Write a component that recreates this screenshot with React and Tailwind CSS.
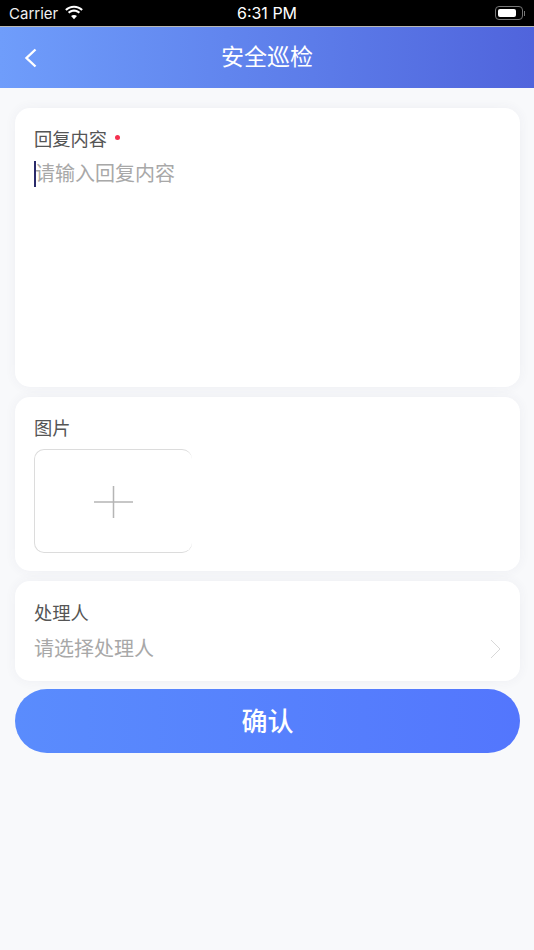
import React from "react";

const cjk = "font-['Liberation_Sans','Noto_Sans_CJK_SC',sans-serif]";

const Card = ({ className = "", children }) => (
  <div className={`ml-[15px] mr-[14px] rounded-[15px] bg-white pl-[19px] pr-[19px] shadow-[0_0_12px_rgba(60,70,100,0.06)] ${className}`}>
    {children}
  </div>
);

const StatusBar = () => (
  <div className="flex h-[27px] items-center justify-between border-b border-[#b9b9b4] bg-black pl-[9px] pr-[9px] text-white">
    <div className="flex w-[160px] items-center gap-[6px]">
      <span className="font-['Inter',sans-serif] text-[15px] leading-none text-[#f0f0f0]">Carrier</span>
      <svg width="20" height="15" viewBox="0 0 19 14" fill="white" className="-mt-[2px]">
        <path d="M9.5 2.6c2.7 0 5.1 1 7 2.8l1.4-1.5C15.700 1.800 12.700.5 9.500.5S3.300 1.800 1.100 3.900l1.400 1.500c1.900-1.800 4.300-2.800 7-2.800z" />
        <path d="M9.500 6.300c1.700 0 3.200.6 4.400 1.700l1.400-1.500c-1.500-1.400-3.600-2.300-5.800-2.300s-4.300.9-5.800 2.300l1.400 1.500c1.200-1.100 2.700-1.700 4.400-1.700z" />
        <path d="M9.500 9.300c-1.100 0-2.100.4-2.800 1.100l2.800 3 2.800-3c-.7-.7-1.700-1.100-2.800-1.100z" />
      </svg>
    </div>
    <span className="font-['Inter',sans-serif] text-[16px] font-normal leading-none">6:31 PM</span>
    <div className="flex w-[160px] items-center justify-end">
      <div className="flex h-[14px] w-[28px] items-center rounded-[4px] border border-[#777] p-[2px]">
        <div className="h-full w-[18px] rounded-[2px] bg-white" />
      </div>
      <div className="ml-[1px] h-[5px] w-[1px] bg-[#777]" />
    </div>
  </div>
);

const App = () => {
  return (
    <div className={`flex h-[950px] w-[534px] flex-col overflow-hidden bg-[#f8f9fb] ${cjk}`}>
      <StatusBar />

      {/* Header */}
      <div className="flex h-[61px] items-center bg-gradient-to-r from-[#6f9dfb] to-[#5064dc] px-[24px]">
        <div className="w-[40px]">
          <svg width="13" height="20" viewBox="0 0 13 20" fill="none" stroke="white" strokeWidth="2.4">
            <path d="M11.500 1.500 2.500 10l9 8.500" />
          </svg>
        </div>
        <h1 className="flex-1 text-center text-[23px] font-normal leading-none text-white">安全巡检</h1>
        <div className="w-[40px]" />
      </div>

      {/* Reply content */}
      <Card className="mt-[20px] h-[279px] pt-[22px]">
        <div className="flex h-[20px] items-center text-[18.300px] leading-none text-[#555]">
          回复内容
          <span className="-mt-[5px] ml-[8px] h-[5px] w-[5px] rounded-full bg-[#f5304f]" />
        </div>
        <div className="relative mt-[9px] flex h-[30px] items-center">
          <div className="absolute left-0 top-[2px] h-[26px] w-[2px] bg-[#2a2a6a]" />
          <span className="ml-[1px] text-[20px] leading-none text-[#a8a8a8]">请输入回复内容</span>
        </div>
      </Card>

      {/* Pictures */}
      <Card className="mt-[10px] h-[174px] pt-[22px]">
        <div className="flex h-[20px] items-center text-[18.300px] leading-none text-[#555]">图片</div>
        <div className="mt-[10px] flex h-[104px] w-[158px] items-center justify-center rounded-[10px] border border-r-0 border-[#dcdcdc]">
          <svg width="39" height="32" viewBox="0 0 39 32" stroke="#b5b5b5" strokeWidth="1.500" className="mt-[2px]">
            <path d="M0 16h39M19.500 0v32" />
          </svg>
        </div>
      </Card>

      {/* Handler */}
      <Card className="mt-[10px] h-[100px] pt-[23px]">
        <div className="flex h-[20px] items-center text-[18.300px] leading-none text-[#555]">处理人</div>
        <div className="mt-[13px] flex h-[24px] items-center justify-between">
          <span className="text-[20px] leading-none text-[#a8a8a8]">请选择处理人</span>
          <svg width="11" height="20" viewBox="0 0 11 20" fill="none" stroke="#d8d8d8" strokeWidth="1">
            <path d="M1 1l9 9-9 9" />
          </svg>
        </div>
      </Card>

      <button className="ml-[15px] mr-[14px] mt-[8px] flex h-[64px] items-center justify-center rounded-full bg-gradient-to-r from-[#5a8cfd] to-[#5376fd] pt-[2px] text-[26px] font-medium text-white">
        确认
      </button>
    </div>
  );
};

export default App;
